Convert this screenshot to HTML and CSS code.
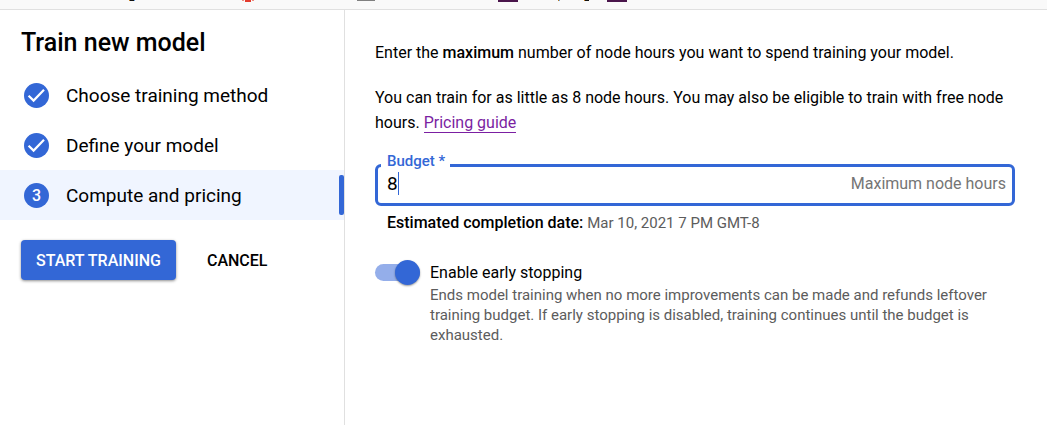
FILE: index.html
```
<!DOCTYPE html>
<html lang="en">
<head>
<meta charset="utf-8">
<meta name="viewport" content="width=device-width, initial-scale=1">
<title>Train new model</title>
<link rel="stylesheet" href="styles.css">
</head>
<body>
<header class="strip">
  <svg class="strip-marks" width="640" height="3" viewBox="0 0 640 3" shape-rendering="crispEdges" aria-hidden="true">
    <path fill="#111" d="M130 0h4v1h-4zM585 0h4v1h-4z"/>
    <path fill="#c27a1d" d="M129 0h1v1h-1zM558 0h1v1h-1zM584 0h1v1h-1z"/>
    <path fill="#6aa5e8" d="M134 0h1v1h-1zM559 0h1v1h-1z"/>
    <path fill="#f08c80" d="M242 0h2v1h-2zM252 0h2v1h-2z"/>
    <path fill="#e33b2e" d="M245 0h6v2h-6z"/>
    <path fill="#808080" d="M357 0h18v1h-18z"/>
    <path fill="#4a154b" d="M498 0h20v2h-20zM607 0h20v2h-20z"/>
  </svg>
</header>
<div class="layout">
  <aside class="sidebar">
    <h1 class="title">Train new model</h1>
    <ol class="steps">
      <li class="step">
        <svg class="badge" viewBox="0 0 25 25" aria-hidden="true"><circle cx="12.5" cy="12.5" r="12.5" fill="#3367d6"/><path d="M4.6 12.7L9.6 17.6L20 6.8" fill="none" stroke="#fff" stroke-width="2.2"/></svg>
        <span>Choose training method</span>
      </li>
      <li class="step">
        <svg class="badge" viewBox="0 0 25 25" aria-hidden="true"><circle cx="12.5" cy="12.5" r="12.5" fill="#3367d6"/><path d="M4.6 12.7L9.6 17.6L20 6.8" fill="none" stroke="#fff" stroke-width="2.2"/></svg>
        <span>Define your model</span>
      </li>
      <li class="step step-active" aria-current="step">
        <span class="badge badge-number">3</span>
        <span>Compute and pricing</span>
      </li>
    </ol>
    <div class="actions">
      <button class="button button-primary" type="button">START TRAINING</button>
      <button class="button" type="button">CANCEL</button>
    </div>
  </aside>
  <main class="content">
    <p class="text">Enter the <strong>maximum</strong> number of node hours you want to spend training your model.</p>
    <p class="text">You can train for as little as 8 node hours. You may also be eligible to train with free node hours. <a class="link" href="#pricing">Pricing guide</a></p>
    <fieldset class="field">
      <legend class="field-legend"><label for="budget">Budget *</label></legend>
      <div class="field-row">
        <input class="field-input" id="budget" type="text" inputmode="numeric" value="8" required>
        <span class="caret" aria-hidden="true"></span>
        <span class="suffix">Maximum node hours</span>
      </div>
    </fieldset>
    <p class="hint"><strong>Estimated completion date:</strong> <span class="date">Mar 10, 2021 7 PM GMT-8</span></p>
    <div class="option">
      <input class="toggle" id="early" type="checkbox" role="switch" aria-describedby="early-note" checked>
      <div class="option-body">
        <label class="option-label" for="early">Enable early stopping</label>
        <p class="option-note" id="early-note">Ends model training when no more improvements can be made and refunds leftover training budget. If early stopping is disabled, training continues until the budget is exhausted.</p>
      </div>
    </div>
  </main>
</div>
</body>
</html>
```
FILE: styles.css
```
* {
  box-sizing: border-box;
}

body {
  margin: 0;
  min-height: 100vh;
  display: flex;
  flex-direction: column;
  background: #fff;
  color: #000;
  font-family: Roboto, "Liberation Sans", sans-serif;
  font-size: 16px;
}

h1, p, ol {
  margin: 0;
  padding: 0;
}

strong {
  font-weight: 500;
}

.strip {
  height: 10px;
  flex: none;
  background: #f9f9f9;
  border-bottom: 1px solid #e0e0e0;
}

.strip-marks {
  display: block;
}

.layout {
  flex: 1;
  display: flex;
}

.sidebar {
  flex: none;
  width: 345px;
  border-right: 1px solid #e0e0e0;
}

.title {
  padding: 18px 21px 12px;
  font-size: 25px;
  line-height: 30px;
  font-weight: 500;
}

.steps {
  list-style: none;
}

.step {
  display: flex;
  align-items: center;
  gap: 17px;
  height: 50px;
  padding-left: 24px;
  font-size: 19px;
}

.step-active {
  position: relative;
  background: #f0f5ff;
}

.step-active::after {
  content: "";
  position: absolute;
  right: 0;
  top: 5px;
  bottom: 5px;
  width: 5px;
  border-radius: 2px;
  background: #3367d6;
}

.badge {
  flex: none;
  width: 25px;
  height: 25px;
}

.badge-number {
  border-radius: 50%;
  background: #3367d6;
  color: #fff;
  font-size: 16px;
  line-height: 25px;
  font-weight: 500;
  text-align: center;
}

.actions {
  display: flex;
  gap: 16px;
  padding: 20px 21px;
}

.button {
  height: 40px;
  padding: 0 15px;
  border: 0;
  border-radius: 4px;
  background: none;
  color: #000;
  font-family: inherit;
  font-size: 16px;
  font-weight: 500;
}

.button-primary {
  background: #3367d6;
  color: #fff;
  box-shadow: 0 1px 3px rgba(0, 0, 0, 0.45);
}

.content {
  flex: 1;
  min-width: 0;
  padding: 30px 32px 20px 30px;
}

.text {
  line-height: 25px;
}

.text + .text {
  margin-top: 20px;
}

.link {
  border-bottom: 1px solid #7b1fa2;
  color: #7b1fa2;
  text-decoration: none;
}

.field {
  min-width: 0;
  margin: 18px 0 0;
  padding: 0 6px 0 3px;
  border: 3px solid #3367d6;
  border-radius: 6px;
}

.field-legend {
  padding: 0 5px 8px 6px;
  color: #3367d6;
  font-size: 15px;
  line-height: 16px;
  font-weight: 500;
}

.field-row {
  position: relative;
  display: flex;
  align-items: center;
  height: 36px;
  margin-top: -10px;
  padding: 0 0 4px 6px;
}

.field-input {
  flex: 1;
  min-width: 0;
  padding: 0;
  border: 0;
  outline: 0;
  background: none;
  color: #000;
  font-family: inherit;
  font-size: 19px;
}

.caret {
  position: absolute;
  left: 17px;
  top: 5px;
  width: 1px;
  height: 23px;
  background: #3367d6;
}

.suffix {
  color: #757575;
}

.hint {
  padding: 4px 12px 0;
  line-height: 25px;
}

.date {
  color: #5c5c5c;
  font-size: 15px;
}

.option {
  display: flex;
  gap: 10px;
  margin-top: 24px;
}

.toggle {
  appearance: none;
  position: relative;
  flex: none;
  width: 45px;
  height: 25px;
  margin: 0;
}

.toggle::before {
  content: "";
  position: absolute;
  inset: 4px 0;
  border-radius: 9px;
  background: #94aeea;
}

.toggle::after {
  content: "";
  position: absolute;
  top: 0;
  right: 0;
  width: 25px;
  height: 25px;
  border-radius: 50%;
  background: #3367d6;
  box-shadow: 0 1px 2px rgba(0, 0, 0, 0.4);
}

.toggle:not(:checked)::after {
  right: 20px;
}

.option-label {
  display: block;
  line-height: 25px;
}

.option-note {
  max-width: 570px;
  color: #5c5c5c;
  font-size: 15px;
  line-height: 20px;
}
```
